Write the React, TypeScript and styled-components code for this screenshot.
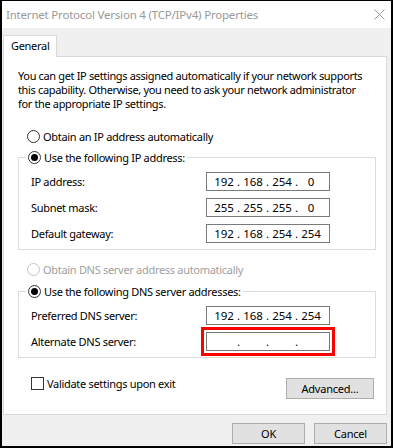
import React from 'react'
import styled, { createGlobalStyle } from 'styled-components'

const GlobalStyle = createGlobalStyle`
    html, body {
        margin: 0;
        padding: 0;
        background: #ffffff;
    }
    * {
        box-sizing: border-box;
    }
`

const uiFont = `"Noto Sans", "Open Sans", Arial, sans-serif`

const Window = styled.div`
    width: 393px;
    height: 448px;
    display: flex;
    flex-direction: column;
    border: 2px solid #000;
    border-top-width: 1px;
    font-family: ${uiFont};
    font-size: 11px;
    letter-spacing: -0.3px;
    color: #000;
`

const TitleBar = styled.div`
    height: 27px;
    flex: none;
    display: flex;
    align-items: center;
    justify-content: space-between;
    padding: 0 6px 1px 4px;
    background: #fff;
`

const Title = styled.span`
    color: #999;
    font-size: 11.5px;
    letter-spacing: -0.2px;
`

const Body = styled.div`
    flex: 1;
    display: flex;
    flex-direction: column;
    background: #f0f0f0;
    padding: 7px 4px 0 1px;
`

const TabStrip = styled.div`
    display: flex;
    position: relative;
    z-index: 1;
    margin-bottom: -1px;
`

const Tab = styled.div`
    height: 22px;
    padding: 2px 7px 0;
    background: #fff;
    border: 1px solid #d9d9d9;
    border-bottom: none;
    line-height: 16px;
`

const Panel = styled.div`
    height: 359px;
    display: flex;
    flex-direction: column;
    background: #fff;
    border: 1px solid #d9d9d9;
    padding: 12px 10px 0 14px;
`

const Intro = styled.p`
    margin: 0;
    line-height: 14px;
    white-space: nowrap;
    letter-spacing: -0.35px;
`

const OptionRow = styled.label<{ $disabled?: boolean; $top: number }>`
    display: flex;
    align-items: center;
    gap: 3px;
    height: 15px;
    margin-top: ${({ $top }) => $top}px;
    padding-left: 9px;
    color: ${({ $disabled }) => ($disabled ? '#a0a0a0' : '#000')};
`

const RadioDot = styled.span<{ $checked?: boolean; $disabled?: boolean }>`
    width: 13px;
    height: 13px;
    flex: none;
    border-radius: 50%;
    border: 1px solid ${({ $disabled }) => ($disabled ? '#c4c4c4' : '#333')};
    background: #fff;
    display: flex;
    align-items: center;
    justify-content: center;

    &::after {
        content: '';
        display: ${({ $checked }) => ($checked ? 'block' : 'none')};
        width: 7px;
        height: 7px;
        border-radius: 50%;
        background: #000;
    }
`

const Group = styled.fieldset<{ $top: number }>`
    margin: ${({ $top }) => $top}px 0 0 0;
    padding: 7px 45px 6px 12px;
    border: 1px solid #dcdcdc;
    min-width: 0;
    display: flex;
    flex-direction: column;
    gap: 7px;
`

const Legend = styled.legend`
    display: flex;
    align-items: center;
    gap: 3px;
    height: 15px;
    margin-left: -5px;
    padding: 0 2px 0 2px;
`

const FieldRow = styled.div`
    display: flex;
    align-items: center;
    justify-content: space-between;
    height: 19px;
`

const IpBox = styled.div`
    width: 124px;
    height: 19px;
    border: 1px solid #7a7a7a;
    background: #fff;
    display: flex;
    align-items: center;
    padding-left: 6px;
    line-height: 16px;
    font-size: 11.5px;
    letter-spacing: -0.1px;
`

const Octet = styled.span`
    width: 22px;
    text-align: center;
`

const Dot = styled.span`
    width: 7px;
    text-align: center;
`

const Highlight = styled.div`
    outline: 3px solid #ff0000;
    outline-offset: 2px;
`

const BottomRow = styled.div`
    display: flex;
    align-items: flex-start;
    justify-content: space-between;
    margin-top: 20px;
    padding: 0 2px 0 13px;
`

const CheckRow = styled.label`
    display: flex;
    align-items: center;
    gap: 3px;
    margin-top: -2px;
    height: 15px;
`

const CheckBox = styled.span`
    width: 13px;
    height: 13px;
    border: 1px solid #333;
    background: #fff;
`

const Button = styled.button<{ $width: number }>`
    width: ${({ $width }) => $width}px;
    height: 21px;
    padding: 0;
    border: 1px solid #adadad;
    background: #e1e1e1;
    font-family: ${uiFont};
    font-size: 11px;
    letter-spacing: -0.2px;
    color: #000;
    line-height: 16px;
`

const Footer = styled.div`
    display: flex;
    justify-content: flex-end;
    gap: 9px;
    margin-top: 8px;
`

const CloseIcon = () => (
    <svg width="11" height="11" viewBox="0 0 11 11">
        <path d="M0.5 0.5 L10.5 10.5 M10.5 0.5 L0.5 10.5" stroke="#9a9a9a" strokeWidth="1" />
    </svg>
)

type IpFieldProps = {
    value?: string[]
}

const IpField = ({ value }: IpFieldProps): JSX.Element => {
    const parts = value ?? ['', '', '', '']
    return (
        <IpBox>
            {parts.map((part, i) => (
                <React.Fragment key={i}>
                    {i > 0 && <Dot>.</Dot>}
                    <Octet>{part}</Octet>
                </React.Fragment>
            ))}
        </IpBox>
    )
}

const App = (): JSX.Element => {
    return (
        <>
            <GlobalStyle />
            <Window>
                <TitleBar>
                    <Title>Internet Protocol Version 4 (TCP/IPv4) Properties</Title>
                    <CloseIcon />
                </TitleBar>
                <Body>
                    <TabStrip>
                        <Tab>General</Tab>
                    </TabStrip>
                    <Panel>
                        <Intro>
                            You can get IP settings assigned automatically if your network supports
                            <br />
                            this capability. Otherwise, you need to ask your network administrator
                            <br />
                            for the appropriate IP settings.
                        </Intro>
                        <OptionRow $top={18}>
                            <RadioDot />
                            Obtain an IP address automatically
                        </OptionRow>
                        <Group $top={6}>
                            <Legend>
                                <RadioDot $checked />
                                Use the following IP address:
                            </Legend>
                            <FieldRow>
                                IP address:
                                <IpField value={['192', '168', '254', '0']} />
                            </FieldRow>
                            <FieldRow>
                                Subnet mask:
                                <IpField value={['255', '255', '255', '0']} />
                            </FieldRow>
                            <FieldRow>
                                Default gateway:
                                <IpField value={['192', '168', '254', '254']} />
                            </FieldRow>
                        </Group>
                        <OptionRow $top={12} $disabled>
                            <RadioDot $disabled />
                            Obtain DNS server address automatically
                        </OptionRow>
                        <Group $top={7}>
                            <Legend>
                                <RadioDot $checked />
                                Use the following DNS server addresses:
                            </Legend>
                            <FieldRow>
                                Preferred DNS server:
                                <IpField value={['192', '168', '254', '254']} />
                            </FieldRow>
                            <FieldRow>
                                Alternate DNS server:
                                <Highlight>
                                    <IpField />
                                </Highlight>
                            </FieldRow>
                        </Group>
                        <BottomRow>
                            <CheckRow>
                                <CheckBox />
                                Validate settings upon exit
                            </CheckRow>
                            <Button $width={88}>Advanced...</Button>
                        </BottomRow>
                    </Panel>
                    <Footer>
                        <Button $width={73}>OK</Button>
                        <Button $width={73}>Cancel</Button>
                    </Footer>
                </Body>
            </Window>
        </>
    )
}

export default App
